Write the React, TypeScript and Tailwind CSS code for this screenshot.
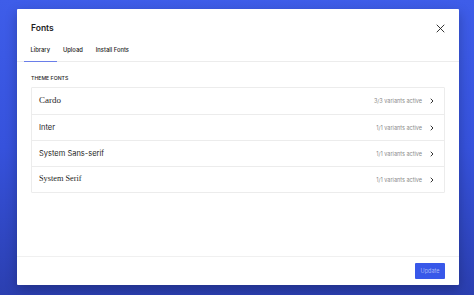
import React from 'react';

const fonts = [
    { name: 'Cardo', serif: true, size: 'text-[9px]', variants: '3/3 variants active' },
    { name: 'Inter', serif: false, size: 'text-[7.5px]', variants: '1/1 variants active' },
    { name: 'System Sans-serif', serif: false, size: 'text-[7.5px]', variants: '1/1 variants active' },
    { name: 'System Serif', serif: true, size: 'text-[8.3px]', variants: '1/1 variants active' },
];

const Chevron = () => (
    <svg width="6" height="6" viewBox="0 0 6 6" fill="none" className="ml-[7px]">
        <path d="M2 1l2 2-2 2" stroke="#1e1e1e" strokeWidth="0.9" strokeLinecap="round" strokeLinejoin="round" />
    </svg>
);

export default function App() {
    return (
        <div
            className="w-[474px] h-[295px] overflow-hidden bg-gradient-to-b from-[#3e5de9] via-[#3652dc] to-[#2b3fb0] pt-[9px] pl-[17px]"
            style={{ fontFamily: 'Inter, "Noto Sans", sans-serif' }}
        >
            <div className="w-[442px] h-[276px] bg-white rounded-[1px] shadow-[0_4px_12px_rgba(0,0,0,0.25)] flex flex-col">
                {/* header */}
                <div className="h-[31px] pt-[8px] px-[14px] flex items-center justify-between">
                    <span className="text-[8.5px] font-semibold text-[#1e1e1e]">Fonts</span>
                    <svg width="9" height="9" viewBox="0 0 9 9" fill="none">
                        <path d="M1 1l7 7M8 1L1 8" stroke="#1e1e1e" strokeWidth="0.9" strokeLinecap="round" />
                    </svg>
                </div>

                {/* tabs */}
                <div className="h-[22px] px-[7px] flex border-b border-[#ececec]">
                    <div className="relative px-[6.5px] flex items-center text-[5.8px] font-medium text-[#1e1e1e]">
                        Library
                        <div className="absolute left-0 right-0 bottom-[-1px] h-[1.5px] bg-[#6a7ee9]" />
                    </div>
                    <div className="px-[6.5px] flex items-center text-[5.8px] font-medium text-[#1e1e1e]">Upload</div>
                    <div className="px-[6.5px] flex items-center text-[5.8px] font-medium text-[#1e1e1e]">Install Fonts</div>
                </div>

                {/* content */}
                <div className="flex-1 px-[14px] pt-[14px]">
                    <div className="text-[5.2px] font-medium uppercase text-[#1e1e1e] leading-none mb-[6px]">Theme Fonts</div>
                    <div className="border border-[#ececec] rounded-[1px]">
                        {fonts.map((f, i) => (
                            <div
                                key={f.name}
                                className={`h-[26px] flex items-center justify-between pl-[7px] pr-[9px] ${i > 0 ? 'border-t border-[#ececec]' : ''}`}
                            >
                                <span
                                    className={`${f.size} text-[#1e1e1e]`}
                                    style={f.serif ? { fontFamily: '"Liberation Serif", "DejaVu Serif", serif' } : undefined}
                                >
                                    {f.name}
                                </span>
                                <div className="flex items-center">
                                    <span className="text-[5.5px] text-[#8a8a8a]">{f.variants}</span>
                                    <Chevron />
                                </div>
                            </div>
                        ))}
                    </div>
                </div>

                {/* footer */}
                <div className="h-[29px] border-t border-[#f0f0f0] px-[14px] flex items-center justify-end">
                    <button className="w-[30px] h-[16px] bg-[#3858e9] text-[5.5px] text-[#a9b7f6] rounded-[1px] flex items-center justify-center">
                        Update
                    </button>
                </div>
            </div>
        </div>
    );
}
